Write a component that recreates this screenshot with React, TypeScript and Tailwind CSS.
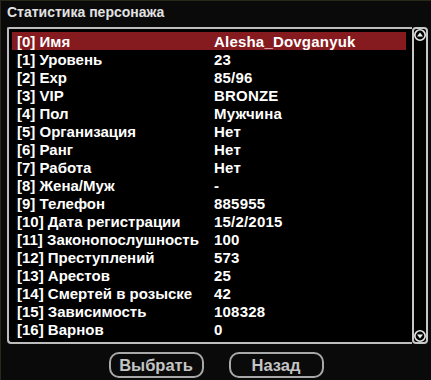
import React from 'react';

const rows: [string, string][] = [
  ['[0] Имя', 'Alesha_Dovganyuk'],
  ['[1] Уровень', '23'],
  ['[2] Exp', '85/96'],
  ['[3] VIP', 'BRONZE'],
  ['[4] Пол', 'Мужчина'],
  ['[5] Организация', 'Нет'],
  ['[6] Ранг', 'Нет'],
  ['[7] Работа', 'Нет'],
  ['[8] Жена/Муж', '-'],
  ['[9] Телефон', '885955'],
  ['[10] Дата регистрации', '15/2/2015'],
  ['[11] Законопослушность', '100'],
  ['[12] Преступлений', '573'],
  ['[13] Арестов', '25'],
  ['[14] Смертей в розыске', '42'],
  ['[15] Зависимость', '108328'],
  ['[16] Варнов', '0'],
];

const ArrowCircle: React.FC<{ down?: boolean }> = ({ down }) => (
  <svg width="12" height="12" viewBox="0 0 12 12" className="block">
    <circle cx="6" cy="6" r="5.2" fill="#000" stroke="#e8e8e8" strokeWidth="1.6" />
    {down ? (
      <path d="M3 4.5 L9 4.5 L6 8.5 Z" fill="#f0f0f0" />
    ) : (
      <path d="M3 7.5 L9 7.5 L6 3.5 Z" fill="#f0f0f0" />
    )}
  </svg>
);

export default function App() {
  return (
    <div
      className="w-[431px] h-[380px] bg-[#0a0a0a] border-l border-t border-[#2a2818] flex flex-col overflow-hidden"
      style={{ fontFamily: '"Liberation Sans", Arial, sans-serif' }}
    >
      <div className="h-[26px] pl-[6px] pt-[1px] text-[14px] font-bold text-[#e2e2e2] leading-[20px]">
        Статистика персонажа
      </div>

      <div className="ml-[6px] w-[421px] h-[317px] flex">
        <div className="flex-1 border-t-2 border-l-2 border-b-2 border-[#bdbdbd] rounded-bl-[4px] rounded-tl-[2px] bg-black pt-[3px] pl-[3px] pr-[6px]">
          {rows.map(([label, value], i) => (
            <div
              key={label}
              className={`h-[18px] flex items-center text-[15px] font-bold text-white leading-none ${
                i === 0 ? 'bg-[#851a1f]' : ''
              }`}
            >
              <span className="w-[202px] pl-[5px] whitespace-nowrap">{label}</span>
              <span className="whitespace-nowrap tracking-[0.2px]">{value}</span>
            </div>
          ))}
        </div>
        <div className="w-[16px] border-2 border-[#c8c8c8] rounded-[4px] bg-black flex flex-col justify-between items-center">
          <ArrowCircle />
          <ArrowCircle down />
        </div>
      </div>

      <div className="flex justify-center gap-[25px] mt-[8px]">
        <button className="w-[95px] h-[26px] rounded-[10px] border-2 border-[#a8a8a8] text-[#c4c4c4] text-[16.5px] font-bold leading-none">
          Выбрать
        </button>
        <button className="w-[95px] h-[26px] rounded-[10px] border-2 border-[#a8a8a8] text-[#c4c4c4] text-[16.5px] font-bold leading-none">
          Назад
        </button>
      </div>
    </div>
  );
}
